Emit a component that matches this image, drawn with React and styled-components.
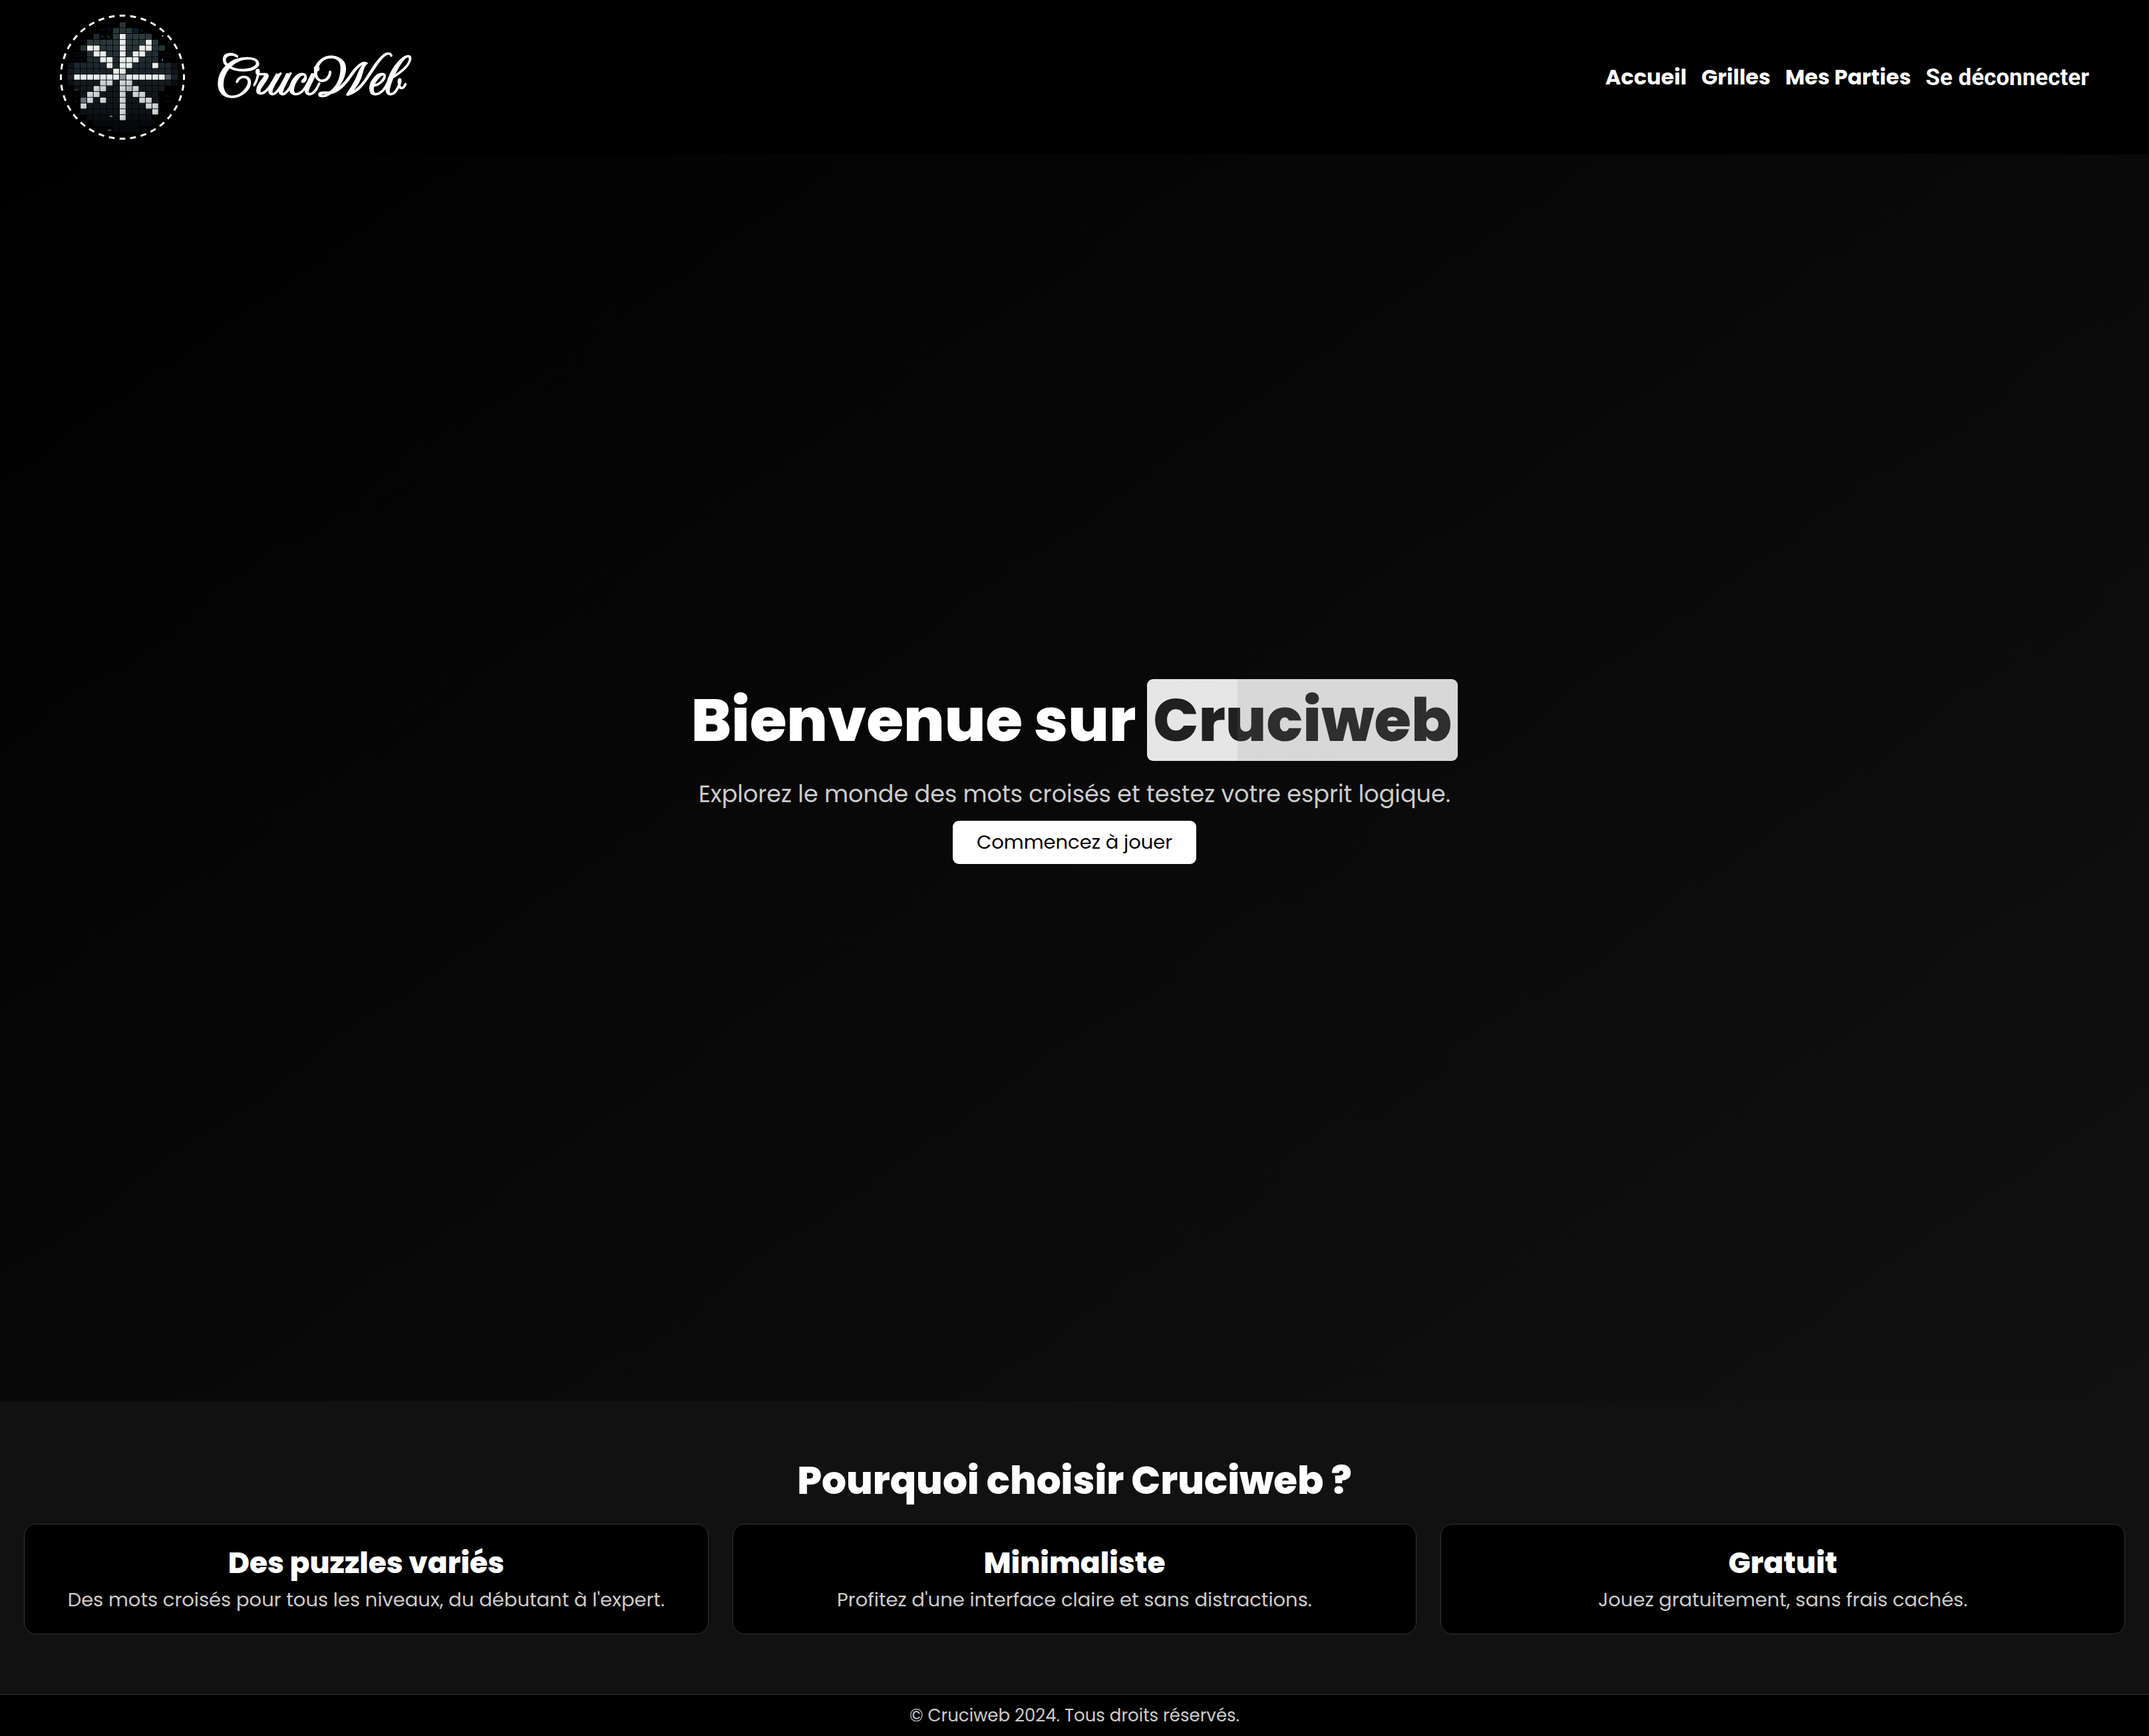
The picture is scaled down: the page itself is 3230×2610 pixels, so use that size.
import React from "react";
import styled, { createGlobalStyle } from "styled-components";

const GlobalStyle = createGlobalStyle`
  * {
    box-sizing: border-box;
    margin: 0;
    padding: 0;
  }

  body {
    background: #000;
    color: #fff;
    font-family: Poppins, Inter, "Open Sans", sans-serif;
    font-size: 29px;
    line-height: 1;
  }
`;

const Page = styled.div`
  display: flex;
  flex-direction: column;
  min-height: 100vh;
`;

const Header = styled.header`
  display: flex;
  align-items: center;
  justify-content: space-between;
  padding: 22px 90px;
  background: #000;
`;

const Brand = styled.a`
  display: flex;
  align-items: center;
  gap: 47px;
  color: #fff;
  text-decoration: none;
`;

const LogoDrawing = styled.svg`
  display: block;
  width: 188px;
  height: 188px;
`;

const BrandName = styled.span`
  font-family: "Imperial Script", "Great Vibes", "Liberation Serif", cursive;
  font-size: 91px;
  font-weight: 700;
  line-height: 96px;
`;

const Nav = styled.nav`
  display: flex;
  align-items: center;
  gap: 22px;
`;

const NavLink = styled.a`
  color: #fff;
  font-size: 32px;
  font-weight: 700;
  text-decoration: none;
`;

const LogoutButton = styled.button`
  border: none;
  background: none;
  color: #fff;
  cursor: pointer;
  font-family: Roboto, "Liberation Sans", Arial, sans-serif;
  font-size: 35px;
  font-weight: 700;
`;

const Hero = styled.section`
  display: flex;
  flex: 1;
  flex-direction: column;
  align-items: center;
  justify-content: center;
  padding: 36px 36px 56px;
  background: linear-gradient(145deg, #000, #111);
  text-align: center;
`;

const HeroTitle = styled.h1`
  margin-bottom: 32px;
  font-size: 90px;
  font-weight: 800;
  line-height: 123px;
`;

const Highlight = styled.span`
  position: relative;
  display: inline-block;
  padding: 0 9px;
  border-radius: 9px;
  background: #e6e6e6;
  color: #202020;

  &::after {
    content: "";
    position: absolute;
    inset: 0 0 0 29%;
    border-radius: 0 9px 9px 0;
    background: rgba(138, 138, 138, 0.14);
  }
`;

const HeroText = styled.p`
  margin-bottom: 23px;
  color: #ccc;
  font-size: 35px;
`;

const PlayButton = styled.button`
  padding: 18px 36px;
  border: none;
  border-radius: 9px;
  background: #fff;
  color: #000;
  cursor: pointer;
  font: inherit;
`;

const Features = styled.section`
  padding: 90px 36px;
  background: #111;
  text-align: center;
`;

const FeaturesTitle = styled.h2`
  margin-bottom: 36px;
  font-size: 58px;
  font-weight: 800;
`;

const CardGrid = styled.div`
  display: grid;
  grid-template-columns: repeat(3, 1fr);
  gap: 36px;
`;

const Card = styled.article`
  padding: 36px;
  border: 1px solid #333;
  border-radius: 18px;
  background: #000;
`;

const CardTitle = styled.h3`
  margin-bottom: 19px;
  font-size: 44px;
  font-weight: 800;
`;

const CardText = styled.p`
  color: #ccc;
`;

const Footer = styled.footer`
  padding: 18px;
  border-top: 1px solid #333;
  background: #000;
  color: #ccc;
  font-size: 26px;
  text-align: center;
`;

// Lit tiles of the crossword mosaic, by row, as column offsets from the centre.
const LIT = {
  "-7": [0],
  "-6": [0, 4],
  "-5": [-5, -4, 0, 3, 4],
  "-4": [-4, -3, 0, 2, 3],
  "-3": [-3, -2, 0, 1, 2],
  "-2": [-2, 0, 1, 5],
  "-1": [-1, 0],
  0: [-7, -6, -5, -4, -3, -2, -1, 1, 2, 3, 4, 5, 6],
  1: [-3, -2, 0, 1],
  2: [-4, -3, 0, 2],
  3: [-5, -4, 0, 2, 3],
  4: [-5, -3, 0, 3, 4],
  5: [-6, 0, 4, 5],
  6: [0, 5],
  7: [0],
};

// Unlit tiles: row, first column, last column, fill, edge.
const UNLIT = [
  [-9, 0, 0, "#263234", "#3a484a"],
  [-8, -1, 1, "#263436", "#364547"],
  [-7, -4, -4, "#1f292b", "#2c383a"],
  [-7, -1, 4, "#2c393b", "#3b494b"],
  [-6, -5, 5, "#2a3739", "#394749"],
  [-5, -6, 6, "#263335", "#354345"],
  [-4, -5, 5, "#222e31", "#303d40"],
  [-3, -5, 5, "#1e2a2c", "#2b383b"],
  [-2, -7, 7, "#1c272a", "#29363a"],
  [-1, -7, 7, "#182326", "#243135"],
  [0, -8, 8, "#172024", "#222e33"],
  [1, -7, 7, "#121a1d", "#1d272b"],
  [2, -6, 6, "#12191c", "#1b2428"],
  [3, -6, 5, "#11171a", "#1a2226"],
  [4, -6, 5, "#101619", "#192125"],
  [5, -5, 5, "#0f1518", "#171f23"],
  [6, -6, 5, "#0d1216", "#151b20"],
  [7, -5, 4, "#090d10", "#11161a"],
  [8, -4, 4, "#05080c", "#0b1017"],
  [9, -1, 2, "#04070b", "#0a0e15"],
];

// Single tiles with a shade of their own: row, column, fill.
const SPECIAL = [
  [-8, 2, "#101c2c"],
  [-2, -8, "#0b1114"],
  [-2, 8, "#0c1317"],
  [-1, -8, "#101a1d"],
  [-1, 8, "#10181c"],
  [1, -8, "#0a1014"],
  [1, 8, "#0a0f14"],
  [2, -7, "#0b1015"],
  [0, 0, "#8d9898"],
  [0, 7, "#4e5859"],
  [2, 1, "#aab5b5"],
  [4, -6, "#66727a"],
];

const tileX = (column) => 90 + column * 9.8;
const tileY = (row) => 90 + row * 8.7;

function Logo() {
  const dark = UNLIT.flatMap(([row, first, last, fill, edge]) =>
    Array.from({ length: last - first + 1 }, (_, i) => ({ row, column: first + i, fill, edge }))
  );
  const lit = Object.entries(LIT).flatMap(([row, columns]) =>
    columns.map((column) => ({ row: Number(row), column }))
  );
  return (
    <LogoDrawing viewBox="0 0 188 188" aria-hidden="true">
      <defs>
        <linearGradient id="lit" x1="0" y1="0" x2="1" y2="1">
          <stop offset="0" stopColor="#f0f6f4" />
          <stop offset="1" stopColor="#dbe3e1" />
        </linearGradient>
        <linearGradient id="litLow" x1="0" y1="0" x2="1" y2="1">
          <stop offset="0" stopColor="#dde3e3" />
          <stop offset="1" stopColor="#b9c2c2" />
        </linearGradient>
      </defs>
      {dark.map(({ row, column, fill, edge }) => (
        <rect
          key={`${row}:${column}`}
          x={tileX(column) + 0.4}
          y={tileY(row) + 0.4}
          width="7.8"
          height="6.8"
          fill={fill}
          stroke={edge}
          strokeWidth="0.8"
        />
      ))}
      {SPECIAL.map(([row, column, fill]) => (
        <rect key={`${row}:${column}`} x={tileX(column)} y={tileY(row)} width="8.6" height="7.6" fill={fill} />
      ))}
      {lit.map(({ row, column }) => (
        <rect
          key={`${row}:${column}`}
          x={tileX(column)}
          y={tileY(row)}
          width="8.8"
          height="7.8"
          fill={row > 0 ? "url(#litLow)" : "url(#lit)"}
        />
      ))}
      <g fill="none" stroke="#0e1a2c" strokeWidth="0.8">
        <path d="M62 22.500h6M71 20.500h6M71 23.500h6" stroke="#1b2340" />
        <path d="M63 30.500v3.500h4M72 30.500v3.500h4" stroke="#35525c" />
        <path d="M22 57.500h16M20 62.500h18M19 67.500h19M156 58.500h12M156 63.500h14" stroke="#10171a" />
        <path d="M22 113.500l6-1" stroke="#4d6a78" />
        <path d="M20 122.500h8M21 130.500h7M157 122.500h10M157 130.500h10" />
      </g>
      <rect x="122" y="23" width="2" height="2" fill="#1b2c3c" />
      <rect x="153.500" y="31" width="2" height="2" fill="#a9b8cc" />
      <rect x="163" y="40" width="2" height="2" fill="#1d3a5c" />
      <rect x="153" y="66" width="2" height="4" fill="#356272" />
      <rect x="75" y="152" width="4" height="1.500" fill="#8a9696" />
      <rect x="72" y="173" width="5" height="1.500" fill="#5c6a6c" />
      <circle
        cx="94"
        cy="94"
        r="92.500"
        pathLength="360"
        fill="none"
        stroke="#fff"
        strokeWidth="3"
        strokeDasharray="5.400 4.600"
        strokeDashoffset="2.700"
      />
    </LogoDrawing>
  );
}

const LINKS = ["Accueil", "Grilles", "Mes Parties"];

const CARDS = [
  {
    title: "Des puzzles variés",
    text: "Des mots croisés pour tous les niveaux, du débutant à l'expert.",
  },
  {
    title: "Minimaliste",
    text: "Profitez d'une interface claire et sans distractions.",
  },
  {
    title: "Gratuit",
    text: "Jouez gratuitement, sans frais cachés.",
  },
];

export default function App() {
  return (
    <Page>
      <GlobalStyle />
      <Header>
        <Brand href="#">
          <Logo />
          <BrandName>CruciWeb</BrandName>
        </Brand>
        <Nav>
          {LINKS.map((label) => (
            <NavLink key={label} href="#">
              {label}
            </NavLink>
          ))}
          <LogoutButton type="button">Se déconnecter</LogoutButton>
        </Nav>
      </Header>
      <Hero>
        <HeroTitle>
          Bienvenue sur <Highlight>Cruciweb</Highlight>
        </HeroTitle>
        <HeroText>Explorez le monde des mots croisés et testez votre esprit logique.</HeroText>
        <PlayButton type="button">Commencez à jouer</PlayButton>
      </Hero>
      <Features>
        <FeaturesTitle>Pourquoi choisir Cruciweb ?</FeaturesTitle>
        <CardGrid>
          {CARDS.map(({ title, text }) => (
            <Card key={title}>
              <CardTitle>{title}</CardTitle>
              <CardText>{text}</CardText>
            </Card>
          ))}
        </CardGrid>
      </Features>
      <Footer>© Cruciweb 2024. Tous droits réservés.</Footer>
    </Page>
  );
}
